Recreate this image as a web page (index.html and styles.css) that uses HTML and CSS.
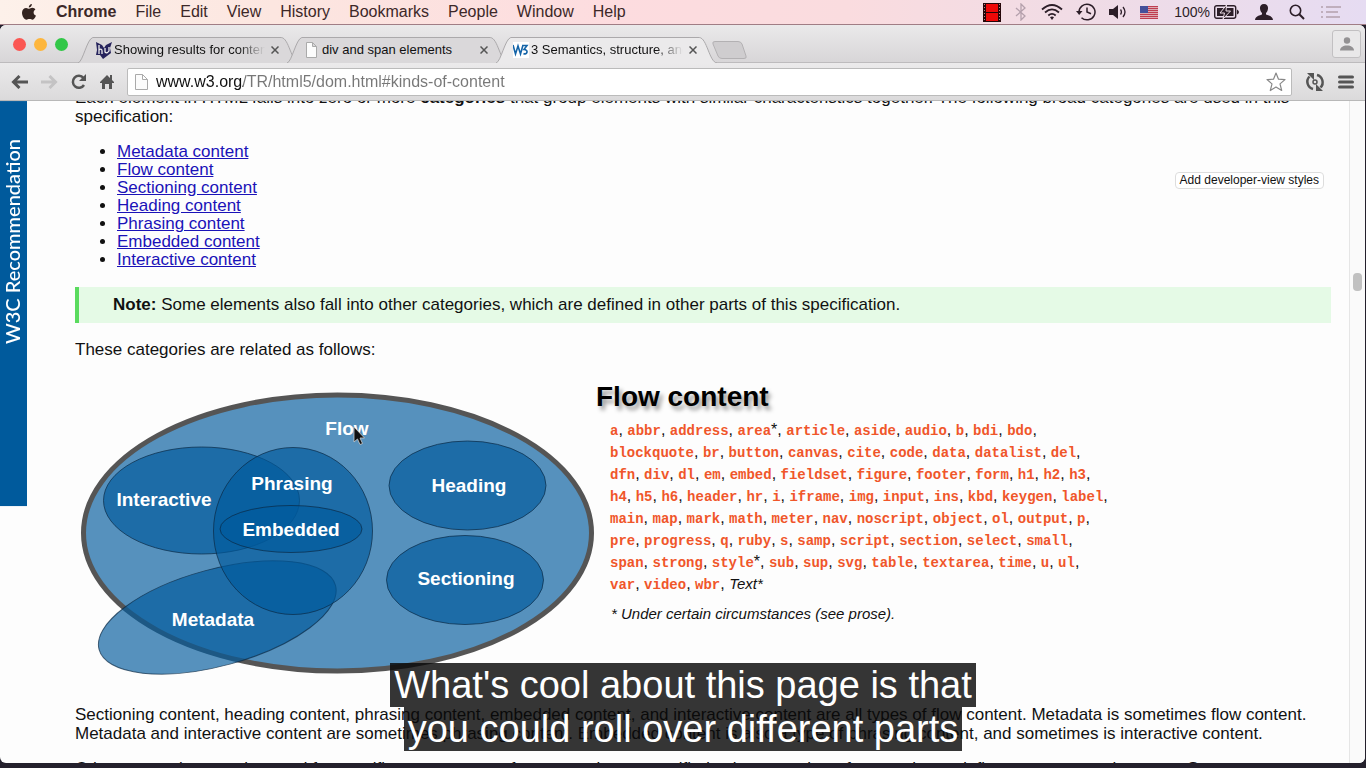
FILE: index.html
```html
<!DOCTYPE html>
<html lang="en">
<head>
<meta charset="utf-8">
<title>3 Semantics, structure, and APIs of HTML documents</title>
<link rel="stylesheet" href="styles.css">
</head>
<body>
<div class="desktop">
  <header class="menubar">
    <nav class="menus" aria-label="Menu bar">
      <button class="menu apple" aria-label="Apple menu"><svg width="16" height="18" viewBox="0 0 16 18"><path d="M10.900 1c.1 1.900-1.400 3.500-3.100 3.500C7.600 2.800 9.200 1.100 10.900 1zM8.200 5.700c.7 0 1.700-.9 3.100-.9 1.500 0 2.500.8 3.100 1.600-2.700 1.600-2.200 5.200.6 6.200-.7 1.900-2 4.100-3.400 4.100-1.200 0-1.600-.7-3.100-.7s-1.900.7-3.100.7C3.400 16.700 1 13.300 1 9.800c0-3.300 2.100-4.900 4.100-4.900 1.300 0 2.300.8 3.100.8z"/></svg></button>
      <button class="menu app">Chrome</button>
      <button class="menu">File</button>
      <button class="menu">Edit</button>
      <button class="menu">View</button>
      <button class="menu">History</button>
      <button class="menu">Bookmarks</button>
      <button class="menu">People</button>
      <button class="menu">Window</button>
      <button class="menu">Help</button>
    </nav>
    <div class="status">
      <div class="extras">
      <svg width="18" height="19" viewBox="0 0 18 19"><path fill="#250609" d="M0 0h18v19H0z"/><path fill="#ee0808" d="M3 1h12v8H3zM3 10h12v8H3z"/><path stroke="#b88" stroke-width="1" stroke-dasharray="1 2" d="M1.500 1v17M16.500 1v17"/></svg>
      <svg class="faint" width="14" height="18" viewBox="0 0 14 18"><path fill="none" stroke="currentColor" stroke-width="1.300" d="M2 5l9 8-4 4V1l4 4-9 8"/></svg>
      <svg width="22" height="18" viewBox="0 0 22 18"><g fill="none" stroke="currentColor" stroke-width="1.800"><path d="M1 6.500Q11-2.500 21 6.500M4 9.500q7-6.200 14 0M7.300 12.500q3.700-3.200 7.400 0"/></g><path fill="currentColor" d="M9 14.300q2-1.500 4 0L11 17z"/></svg>
      <svg width="20" height="18" viewBox="0 0 20 18"><g fill="none" stroke="currentColor" stroke-width="1.500"><path d="M3 9a8 7.800 0 1 1 2.500 5.700M11 4.500V9l4 1.800"/></g><path fill="currentColor" d="M0 8h6.500L3.200 12z"/></svg>
      <svg width="18" height="16" viewBox="0 0 18 16"><path fill="currentColor" d="M0 5h4l5-4v14l-5-4H0z"/><path fill="none" stroke="currentColor" stroke-width="1.300" d="M11.500 5.500q1.800 2.500 0 5M14 3q4 5 0 10"/></svg>
      <svg class="flag" width="18" height="13" viewBox="0 0 18 13"><path fill="#dba9b1" d="M0 0h18v13H0z"/><path stroke="#bf3d50" d="M0 .5h18M0 2.500h18M0 4.500h18M0 6.500h18M0 8.500h18M0 10.500h18M0 12.500h18"/><path fill="#45509a" d="M0 0h8v7H0z"/></svg>
      </div>
      <span class="power"><span>100%</span>
      <svg width="25" height="14" viewBox="0 0 25 14"><rect x=".7" y=".7" width="21" height="12.600" rx="2" fill="none" stroke="currentColor" stroke-width="1.400"/><path fill="currentColor" d="M3 3h16.500v8H3zM23 4.500q2 1 2 2.500t-2 2.500z"/><path fill="currentColor" stroke="#eedfe8" d="M12.500 0L6 8h4.500L9 14l7.500-8H12z"/></svg></span>
      <svg width="18" height="16" viewBox="0 0 18 16"><path fill="currentColor" d="M9 0c3 0 4.200 2 4 4.500-.2 2-1 3.500-2 4.500v1.500c2 1 6.500 1.300 7 5.500H0c.5-4.200 5-4.500 7-5.500V9C6 8 5.200 6.500 5 4.500 4.800 2 6 0 9 0z"/></svg>
      <svg width="16" height="16" viewBox="0 0 16 16"><g fill="none" stroke="currentColor"><circle cx="6.500" cy="6.500" r="5.200" stroke-width="1.600"/><path stroke-width="2" d="M10.300 10.300L15 15"/></g></svg>
      <svg class="faint" width="20" height="12" viewBox="0 0 20 12"><path stroke="currentColor" stroke-width="1.600" d="M0 1h2M5 1h15M0 6h2M5 6h12M0 11h2M5 11h14"/></svg>
    </div>
  </header>

  <div class="window">
    <div class="tabstrip">
      <div class="lights">
        <button class="light red" aria-label="Close window"></button>
        <button class="light amber" aria-label="Minimise window"></button>
        <button class="light green" aria-label="Zoom window"></button>
      </div>
      <div class="tabs">
        <div class="tab">
          <svg class="shape" viewBox="0 0 224 26" preserveAspectRatio="none"><path d="M0 26C5 25 9 2 15 .500H206C214 1 216 25 224 26"/></svg>
          <svg width="17" height="17" viewBox="0 0 17 17"><path fill="#26235c" d="M1 0l6 3 2 3 2-3 6-3-2 6 1 5-4 3-4 3-3-4H1l1-5z"/><path fill="none" stroke="#eee" stroke-width="1.300" d="M4 3v9M4 8q3-2 3 1v3M10 6v4q2 2 4-1V5"/></svg>
          <button class="title fade">Showing results for content</button>
          <button class="close" aria-label="Close tab"><svg width="8" height="8" viewBox="0 0 8 8"><path d="M.5.500l7 7M7.500.500l-7 7"/></svg></button>
        </div>
        <div class="tab">
          <svg class="shape" viewBox="0 0 224 26" preserveAspectRatio="none"><path d="M0 26C5 25 9 2 15 .500H206C214 1 216 25 224 26"/></svg>
          <svg class="doc" width="16" height="16" viewBox="0 0 16 16"><path d="M2.500.500h6l4 4v11h-10zM8.500.500v4h4"/></svg>
          <button class="title">div and span elements</button>
          <button class="close" aria-label="Close tab"><svg width="8" height="8" viewBox="0 0 8 8"><path d="M.5.500l7 7M7.500.500l-7 7"/></svg></button>
        </div>
        <div class="tab active">
          <svg class="shape" viewBox="0 0 224 26" preserveAspectRatio="none"><path d="M0 26C5 25 9 2 15 .500H206C214 1 216 25 224 26"/></svg>
          <svg width="16" height="16" viewBox="0 0 16 16"><path fill="#fff" d="M0 0h16v16H0z"/><path fill="none" stroke="#1464a8" stroke-width="1.600" d="M0 3l2.500 9L5 4l2.500 8L10 3M9.500 3.500H14l-3 4c5 0 3 6-.5 4"/></svg>
          <button class="title fade">3 Semantics, structure, and APIs</button>
          <button class="close" aria-label="Close tab"><svg width="8" height="8" viewBox="0 0 8 8"><path d="M.5.500l7 7M7.500.500l-7 7"/></svg></button>
        </div>
        <button class="newtab" aria-label="New tab"><svg width="35" height="18" viewBox="0 0 35 18"><path d="M3 .500h23q3 0 4 2.500l4 12q1 2.500-2 2.500H10q-3 0-4-2.500L1 3Q0 .500 3 .500z"/></svg></button>
      </div>
      <button class="profile" aria-label="Profile"><svg width="14" height="14" viewBox="0 0 14 14"><circle cx="7" cy="3.500" r="3.200"/><path d="M0 13.500c0-3 3-5 7-5s7 2 7 5z"/></svg></button>
    </div>

    <div class="toolbar">
      <button class="tool" aria-label="Back"><svg width="17" height="14" viewBox="0 0 17 14"><path fill="none" stroke="currentColor" stroke-width="3" d="M17 7H3M8.500 1l-6 6 6 6"/></svg></button>
      <button class="tool off" aria-label="Forward"><svg width="17" height="14" viewBox="0 0 17 14"><path fill="none" stroke="currentColor" stroke-width="3" d="M0 7h14M8.500 1l6 6-6 6"/></svg></button>
      <button class="tool" aria-label="Reload"><svg width="16" height="16" viewBox="0 0 16 16"><path fill="none" stroke="currentColor" stroke-width="2.500" d="M12.500 4A6 6 0 1 0 13 11"/><path fill="currentColor" d="M15 0v7H8z"/></svg></button>
      <button class="tool" aria-label="Home"><svg width="14" height="15" viewBox="0 0 14 15"><path fill="currentColor" d="M7 1l3 3V1h2v5l2 2v1h-2v6H9v-5H5v5H2V9H0V8z"/></svg></button>
      <div class="omnibox">
        <svg class="doc" width="13" height="16" viewBox="0 0 13 16"><path d="M.5.500h7l5 5v10H.5zM7.500.500v5h5"/></svg>
        <input class="url" type="text" aria-label="Address" value="www.w3.org/TR/html5/dom.html#kinds-of-content">
        <button class="star" aria-label="Bookmark this page"><svg width="20" height="20" viewBox="0 0 20 20"><path fill="#fff" stroke="#888" stroke-width="1.200" stroke-linejoin="round" d="M10 1l2.500 6.200 6.500.4-5 4.300 1.700 6.600L10 15l-5.700 3.500L6 11.900 1 7.600l6.500-.4z"/></svg></button>
      </div>
      <button class="tool" aria-label="Extension"><svg width="20" height="20" viewBox="0 0 20 20"><g fill="none" stroke="currentColor" stroke-width="2.500"><path d="M8 17A7.500 7.500 0 0 1 4.500 4.500M12 3a7.500 7.500 0 0 1 3.500 12.500"/><circle cx="10" cy="10" r="2" stroke-width="1.500"/></g><path fill="currentColor" d="M2 1h7v7zM18 19h-7v-7z"/></svg></button>
      <button class="tool" aria-label="Chrome menu"><svg width="16" height="14" viewBox="0 0 16 14"><path stroke="currentColor" stroke-width="3" stroke-linecap="round" d="M1.500 2h13M1.500 7h13M1.500 12h13"/></svg></button>
    </div>

    <div class="viewport">
      <aside class="band">W3C Recommendation</aside>
      <main class="article">
        <p class="first">Each element in HTML falls into zero or more <b>categories</b> that group elements with similar characteristics together. The following broad categories are used in this<br>specification:</p>
        <div class="kinds">
          <ul>
            <li><a href="#metadata">Metadata content</a></li>
            <li><a href="#flow">Flow content</a></li>
            <li><a href="#sectioning">Sectioning content</a></li>
            <li><a href="#heading">Heading content</a></li>
            <li><a href="#phrasing">Phrasing content</a></li>
            <li><a href="#embedded">Embedded content</a></li>
            <li><a href="#interactive">Interactive content</a></li>
          </ul>
          <button class="devview">Add developer-view styles</button>
        </div>
        <p class="note"><b>Note:</b> Some elements also fall into other categories, which are defined in other parts of this specification.</p>
        <p>These categories are related as follows:</p>
        <div class="figure">
          <svg class="venn" width="521" height="302" viewBox="75 379 521 302" role="img" aria-label="Content categories">
            <g class="sets">
              <ellipse class="outer" cx="337.500" cy="533" rx="254" ry="138"/>
              <ellipse cx="467.500" cy="485.500" rx="78.500" ry="44.500"/>
              <ellipse cx="465" cy="580" rx="78.500" ry="44.500"/>
              <ellipse cx="201.500" cy="500.500" rx="98" ry="53.500"/>
              <ellipse cx="217.300" cy="617.500" rx="122.500" ry="48.300" transform="rotate(-15.200 217.300 617.500)"/>
              <ellipse cx="293" cy="531" rx="79.500" ry="83.500"/>
              <ellipse cx="291" cy="529" rx="71" ry="23.500"/>
            </g>
            <g class="labels">
              <text x="347" y="435">Flow</text>
              <text x="292" y="490">Phrasing</text>
              <text x="164" y="506">Interactive</text>
              <text x="291" y="536">Embedded</text>
              <text x="469" y="492">Heading</text>
              <text x="466" y="585">Sectioning</text>
              <text x="213" y="626">Metadata</text>
            </g>
            <path d="M354 427v15l3.500-3 2.500 5.500 2.500-1-2.500-5.500h4.500z" fill="#111" stroke="#ccc" stroke-width=".8"/>
          </svg>
          <section class="detail">
            <h2>Flow content</h2>
            <p class="elements"><code>a</code>, <code>abbr</code>, <code>address</code>, <code>area</code>*, <code>article</code>, <code>aside</code>, <code>audio</code>, <code>b</code>, <code>bdi</code>, <code>bdo</code>,<br>
            <code>blockquote</code>, <code>br</code>, <code>button</code>, <code>canvas</code>, <code>cite</code>, <code>code</code>, <code>data</code>, <code>datalist</code>, <code>del</code>,<br>
            <code>dfn</code>, <code>div</code>, <code>dl</code>, <code>em</code>, <code>embed</code>, <code>fieldset</code>, <code>figure</code>, <code>footer</code>, <code>form</code>, <code>h1</code>, <code>h2</code>, <code>h3</code>,<br>
            <code>h4</code>, <code>h5</code>, <code>h6</code>, <code>header</code>, <code>hr</code>, <code>i</code>, <code>iframe</code>, <code>img</code>, <code>input</code>, <code>ins</code>, <code>kbd</code>, <code>keygen</code>, <code>label</code>,<br>
            <code>main</code>, <code>map</code>, <code>mark</code>, <code>math</code>, <code>meter</code>, <code>nav</code>, <code>noscript</code>, <code>object</code>, <code>ol</code>, <code>output</code>, <code>p</code>,<br>
            <code>pre</code>, <code>progress</code>, <code>q</code>, <code>ruby</code>, <code>s</code>, <code>samp</code>, <code>script</code>, <code>section</code>, <code>select</code>, <code>small</code>,<br>
            <code>span</code>, <code>strong</code>, <code>style</code>*, <code>sub</code>, <code>sup</code>, <code>svg</code>, <code>table</code>, <code>textarea</code>, <code>time</code>, <code>u</code>, <code>ul</code>,<br>
            <code>var</code>, <code>video</code>, <code>wbr</code>, <i>Text*</i></p>
            <p class="footnote">* Under certain circumstances (see prose).</p>
          </section>
        </div>
        <p>Sectioning content, heading content, phrasing content, embedded content, and interactive content are all types of flow content. Metadata is sometimes flow content.<br>Metadata and interactive content are sometimes phrasing content. Embedded content is also a type of phrasing content, and sometimes is interactive content.</p>
        <p class="last">Other categories are also used for specific purposes, e.g. form controls are specified using a number of categories to define common requirements. Some</p>
      </main>
      <div class="scrollbar"><div class="thumb"></div></div>
    </div>
  </div>

  <div class="caption"><span>What's cool about this page is that</span><br><span>you could roll over different parts</span></div>
</div>
</body>
</html>
```
FILE: styles.css
```css
* { box-sizing: border-box; }
body { margin: 0; font-family: "Liberation Sans", Arial, sans-serif; color: #111; }
button { border: 0; padding: 0; background: none; font: inherit; color: inherit; flex: none; }
svg { display: block; flex: none; }

.desktop {
  position: relative;
  display: flex;
  flex-direction: column;
  height: 100vh;
  overflow: hidden;
  background: #24202c;
  padding-bottom: 5px;
}

/* menu bar */
.menubar {
  display: flex;
  justify-content: space-between;
  align-items: center;
  height: 25px;
  flex: none;
  padding: 0 25px 0 21px;
  font-size: 16px;
  color: #3c2828;
  background: linear-gradient(90deg, #fdf1ea, #fce6e0 20%, #fddcdf 45%, #fadcdf 62%, #f0dce6 80%, #e6dcf2);
  border-bottom: 1px solid #a07d85;
}
.menus { display: flex; gap: 19px; align-items: center; }
.apple { fill: #33231f; }
.app { font-weight: bold; }
.status { display: flex; align-items: center; gap: 16px; color: #2c1e28; font-size: 14px; }
.extras { display: flex; align-items: center; gap: 13px; }
.faint { color: #b4a0ac; }
.power { display: flex; align-items: center; gap: 4px; }

/* window */
.window {
  display: flex;
  flex-direction: column;
  flex: 1;
  min-height: 0;
  margin-right: 1px;
  background: #fdfdfd;
  border-radius: 6px;
  overflow: hidden;
}
.tabstrip {
  display: flex;
  height: 38px;
  flex: none;
  align-items: flex-end;
  padding: 0 4px 0 13px;
  background: linear-gradient(#eae9ea, #d8d6d8);
  border-bottom: 1px solid #bdbbbd;
}
.lights { display: flex; gap: 8px; padding-bottom: 11px; }
.light { width: 13px; height: 13px; border-radius: 50%; }
.red { background: #fb5753; }
.amber { background: #fdb63d; }
.green { background: #32c748; }
.tabs { display: flex; flex: 1; padding-left: 10px; margin-bottom: -1px; align-items: flex-end; }
.tab {
  position: relative;
  display: flex;
  align-items: center;
  width: 221px;
  height: 26px;
  margin-right: -12px;
  padding: 0 20px 0 17px;
  font-size: 13px;
}
.shape { position: absolute; inset: 0; width: 100%; height: 100%; fill: #dad8da; stroke: #aaa8aa; }
.active { z-index: 1; }
.active .shape { fill: #ebeaeb; }
.tab > :not(.shape) { position: relative; }
.title { flex: 1; min-width: 0; margin-right: 6px; padding-left: 2px; text-align: left; white-space: nowrap; overflow: hidden; line-height: 18px; }
.fade { mask-image: linear-gradient(90deg, #000 82%, transparent); }
.close { stroke: #555; stroke-width: 1.5; fill: none; }
.doc { fill: #fcfcfc; stroke: #aaa; }
.newtab { margin-left: 7px; padding-bottom: 4px; fill: #cfcdcf; stroke: #b3b1b3; }
.profile {
  display: flex;
  justify-content: center;
  align-items: center;
  width: 29px;
  height: 28px;
  margin-bottom: 4px;
  border: 1px solid #c2c0c2;
  border-radius: 3px;
  background: #e9e8e9;
  fill: #939193;
}
.toolbar {
  display: flex;
  align-items: center;
  gap: 13px;
  height: 38px;
  flex: none;
  padding: 0 11px;
  background: linear-gradient(#ebeaeb, #dbdadb);
  border-bottom: 1px solid #b8b8b8;
}
.tool { color: #555; }
.off { color: #c4c3c4; }
.omnibox {
  display: flex;
  align-items: center;
  flex: 1;
  height: 28px;
  padding: 0 5px 0 7px;
  background: #fff;
  border: 1px solid #bbb;
  border-radius: 2px;
}
.url {
  flex: 1;
  min-width: 0;
  padding: 0;
  margin-left: 8px;
  border: 0;
  outline: 0;
  font: 16px "Liberation Sans", Arial, sans-serif;
  color: transparent;
  background: linear-gradient(90deg, #111 87px, #777 87px);
  background-clip: text;
}

/* page */
.viewport { display: flex; flex: 1; min-height: 0; align-items: flex-start; overflow: hidden; }
.band {
  width: 27px;
  padding: 162px 0 38px;
  writing-mode: vertical-rl;
  transform: rotate(180deg);
  background: #005a9c;
  color: #fff;
  font: 500 20px/25px Lato, sans-serif;
  white-space: nowrap;
}
.article { flex: 1; min-width: 0; padding: 0 18px 0 48px; font-size: 17px; line-height: 19px; white-space: nowrap; }
.article p { margin: 16px 0 0; }
.article .first { margin-top: -13px; }
.kinds { display: flex; justify-content: space-between; align-items: flex-start; margin: 17px 7px 18px 0; }
.kinds ul { margin: 0; padding-left: 42px; line-height: 18px; }
.kinds a { color: #1a12b8; }
.devview { margin-top: 29px; padding: 0 4px; height: 17px; font-size: 12px; line-height: 15px; border: 1px solid #ddd; border-radius: 4px; background: #fff; }
.article .note { margin: 0 0 17px; padding: 8px 34px 9px; border-left: 4px solid #5adb5e; background: #e5fae6; }
.figure { display: flex; margin: 20px 0 24px; }
.article .figure + p, .article .note + p { margin-top: 0; }
.sets ellipse { fill: #005a9c; fill-opacity: .66; stroke: #0a2a44; stroke-opacity: .7; stroke-width: 1; }
.sets .outer { stroke: #555; stroke-opacity: 1; stroke-width: 5; }
.labels { fill: #fff; font-size: 19px; font-weight: bold; text-anchor: middle; }
.detail h2 { margin: 0; font-size: 28px; line-height: 36px; color: #000; text-shadow: 3px 4px 4px #999; }
.article .elements { margin: 4px 0 0 14px; font-size: 16px; line-height: 22px; }
.elements code { font: bold 14px "Liberation Mono", monospace; color: #f0562a; }
.elements i { font-size: 15px; }
.article .footnote { margin: 9px 0 0 15px; font-size: 15px; font-style: italic; }
.scrollbar { align-self: stretch; width: 16px; flex: none; padding: 172px 3px 0; background: #fafafa; border-left: 1px solid #e6e6e6; }
.thumb { width: 9px; height: 18px; border-radius: 4px; background: #c1c1c1; }

/* subtitle overlay */
.caption {
  position: absolute;
  left: 0;
  right: 0;
  bottom: 17px;
  z-index: 2;
  text-align: center;
  font-size: 38px;
  line-height: 44px;
  color: #fff;
}
.caption span { padding: 1px 4px; background: rgba(8, 8, 8, .82); }
```
